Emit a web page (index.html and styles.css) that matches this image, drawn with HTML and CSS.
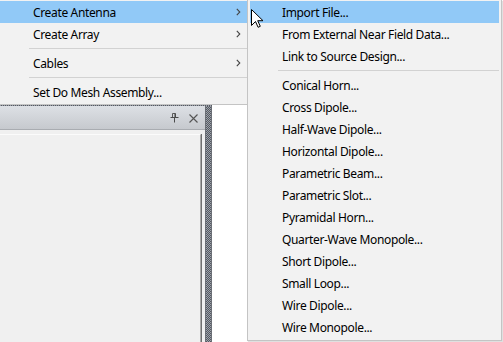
FILE: index.html
```html
<!DOCTYPE html>
<html lang="en">
<head>
  <meta charset="UTF-8">
  <title>Create Antenna menu</title>
  <link rel="stylesheet" href="styles.css">
</head>
<body>

  <div class="screen">
    <!-- the application behind the popup menus -->
    <div class="app">
      <div class="app-top"></div>
      <div class="dock-row">
        <div class="dock">
          <div class="dock-edge"></div>
          <div class="dock-main">
            <div class="dock-frame">
              <div class="dock-title">
                <svg class="pin" width="9" height="10" viewBox="0 0 9 10">
                  <path d="M2.5 0.5h3v4h-3z" fill="none" stroke="#5a5a5a"/>
                  <path d="M5 0.5v4" stroke="#3c3c3c"/>
                  <path d="M0.5 4.5h8" stroke="#4a4a4a"/>
                  <path d="M4.5 4.5v5" stroke="#4a4a4a"/>
                </svg>
                <svg class="close" width="9" height="9" viewBox="0 0 9 9">
                  <path d="M0.5 0.5l8 8M8.5 0.5l-8 8" stroke="#555" stroke-width="1.1"/>
                </svg>
              </div>
              <div class="dock-body"></div>
            </div>
            <div class="splitter"></div>
          </div>
        </div>
        <div class="workspace"></div>
      </div>
    </div>

    <!-- main popup menu -->
    <div class="menu menu-main">
      <div class="item active">Create Antenna
        <svg class="chev" width="5" height="8" viewBox="0 0 5 8"><path d="M0.8 0.8l3 3.2-3 3.2" fill="none" stroke="#444" stroke-width="1.1"/></svg>
      </div>
      <div class="item">Create Array
        <svg class="chev" width="5" height="8" viewBox="0 0 5 8"><path d="M0.8 0.8l3 3.2-3 3.2" fill="none" stroke="#444" stroke-width="1.1"/></svg>
      </div>
      <div class="sep"></div>
      <div class="item">Cables
        <svg class="chev" width="5" height="8" viewBox="0 0 5 8"><path d="M0.8 0.8l3 3.2-3 3.2" fill="none" stroke="#444" stroke-width="1.1"/></svg>
      </div>
      <div class="sep"></div>
      <div class="item">Set Do Mesh Assembly...</div>
    </div>

    <!-- submenu -->
    <div class="menu menu-sub">
      <div class="item active">Import File...</div>
      <div class="item">From External Near Field Data...</div>
      <div class="item">Link to Source Design...</div>
      <div class="sep"></div>
      <div class="item">Conical Horn...</div>
      <div class="item">Cross Dipole...</div>
      <div class="item">Half-Wave Dipole...</div>
      <div class="item">Horizontal Dipole...</div>
      <div class="item">Parametric Beam...</div>
      <div class="item">Parametric Slot...</div>
      <div class="item">Pyramidal Horn...</div>
      <div class="item">Quarter-Wave Monopole...</div>
      <div class="item">Short Dipole...</div>
      <div class="item">Small Loop...</div>
      <div class="item">Wire Dipole...</div>
      <div class="item">Wire Monopole...</div>
    </div>

    <!-- mouse pointer -->
    <svg class="cursor" width="13" height="20" viewBox="0 0 13 20">
      <path d="M0.5 0.5v16l4-4 2.6 5.8 2.2-1-2.6-5.6h5.3z" fill="#fff" stroke="#000" stroke-linejoin="miter"/>
    </svg>
  </div>

</body>
</html>
```

FILE: styles.css
```css
body, html {
  margin: 0;
  background: #fff;
}

.screen {
  position: relative;
  width: 503px;
  height: 342px;
  overflow: hidden;
  font-family: "Noto Sans", sans-serif;
  font-size: 12px;
  letter-spacing: -0.35px;
  color: #000;
}

/* application behind the menus */
.app {
  display: flex;
  flex-direction: column;
  height: 100%;
}

.app-top {
  height: 105px;
  flex: none;
}

.dock-row {
  flex: 1;
  display: flex;
}

.dock {
  width: 212px;
  display: flex;
  flex-direction: column;
}

.dock-edge {
  height: 1px;
  background: repeating-conic-gradient(#555961 0% 25%, #9da2aa 0% 50%) 0 0 / 2px 2px;
}

.dock-main {
  flex: 1;
  display: flex;
}

.dock-frame {
  flex: 1;
  display: flex;
  flex-direction: column;
  background: #f0f0f0;
}

.dock-title {
  height: 23px;
  border-bottom: 1px solid #a9acb1;
  background: linear-gradient(#dde0e5, #c6c9ce);
  display: flex;
  align-items: center;
  justify-content: flex-end;
  gap: 10px;
  padding-right: 7px;
}

.pin {
  margin-top: 1px;
}

.close {
  margin-top: 1px;
}

.dock-body {
  flex: 1;
  margin: 4px 4px 0 0;
  border-top: 1px solid #fbfbfb;
  border-right: 1px solid #a8a8a8;
  box-shadow: 1px 0 0 #6f6f6f;
  background: #f0f0f0;
}

.splitter {
  width: 5px;
  border-left: 1px solid #6b6f76;
  border-right: 1px solid #6b6f76;
  background: repeating-conic-gradient(#555961 0% 25%, #9da2aa 0% 50%) 0 0 / 2px 2px;
}

.workspace {
  flex: 1;
  background: #fff;
}

/* popup menus */
.menu {
  position: absolute;
  top: 0;
  box-sizing: border-box;
  background: #f2f2f2;
  border: 1px solid #c4c4c4;
  border-top: none;
}

.menu-main {
  left: 0;
  width: 248px;
  border-left: none;
  padding: 1px 0 1px 0;
}

.menu-sub {
  left: 247px;
  width: 255px;
  height: 341px;
  padding: 1px 2px 2px 2px;
  box-shadow: 1px 1px 1px rgba(0, 0, 0, 0.12);
}

.item {
  height: 22px;
  display: flex;
  align-items: center;
  white-space: nowrap;
}

.menu-main .item {
  padding-left: 33px;
  padding-right: 6px;
}

.menu-sub .item {
  padding-left: 32px;
}

.item.active {
  background: #91c9f7;
}

.chev {
  margin-left: auto;
}

.sep {
  height: 7px;
  box-sizing: border-box;
  border-bottom: 3px solid transparent;
  border-top: 3px solid transparent;
  background: #d2d2d2;
  background-clip: padding-box;
}

.menu-main .sep {
  margin-left: 29px;
}

.menu-sub .sep {
  margin-left: 28px;
}

.cursor {
  position: absolute;
  left: 251px;
  top: 9px;
}
```
